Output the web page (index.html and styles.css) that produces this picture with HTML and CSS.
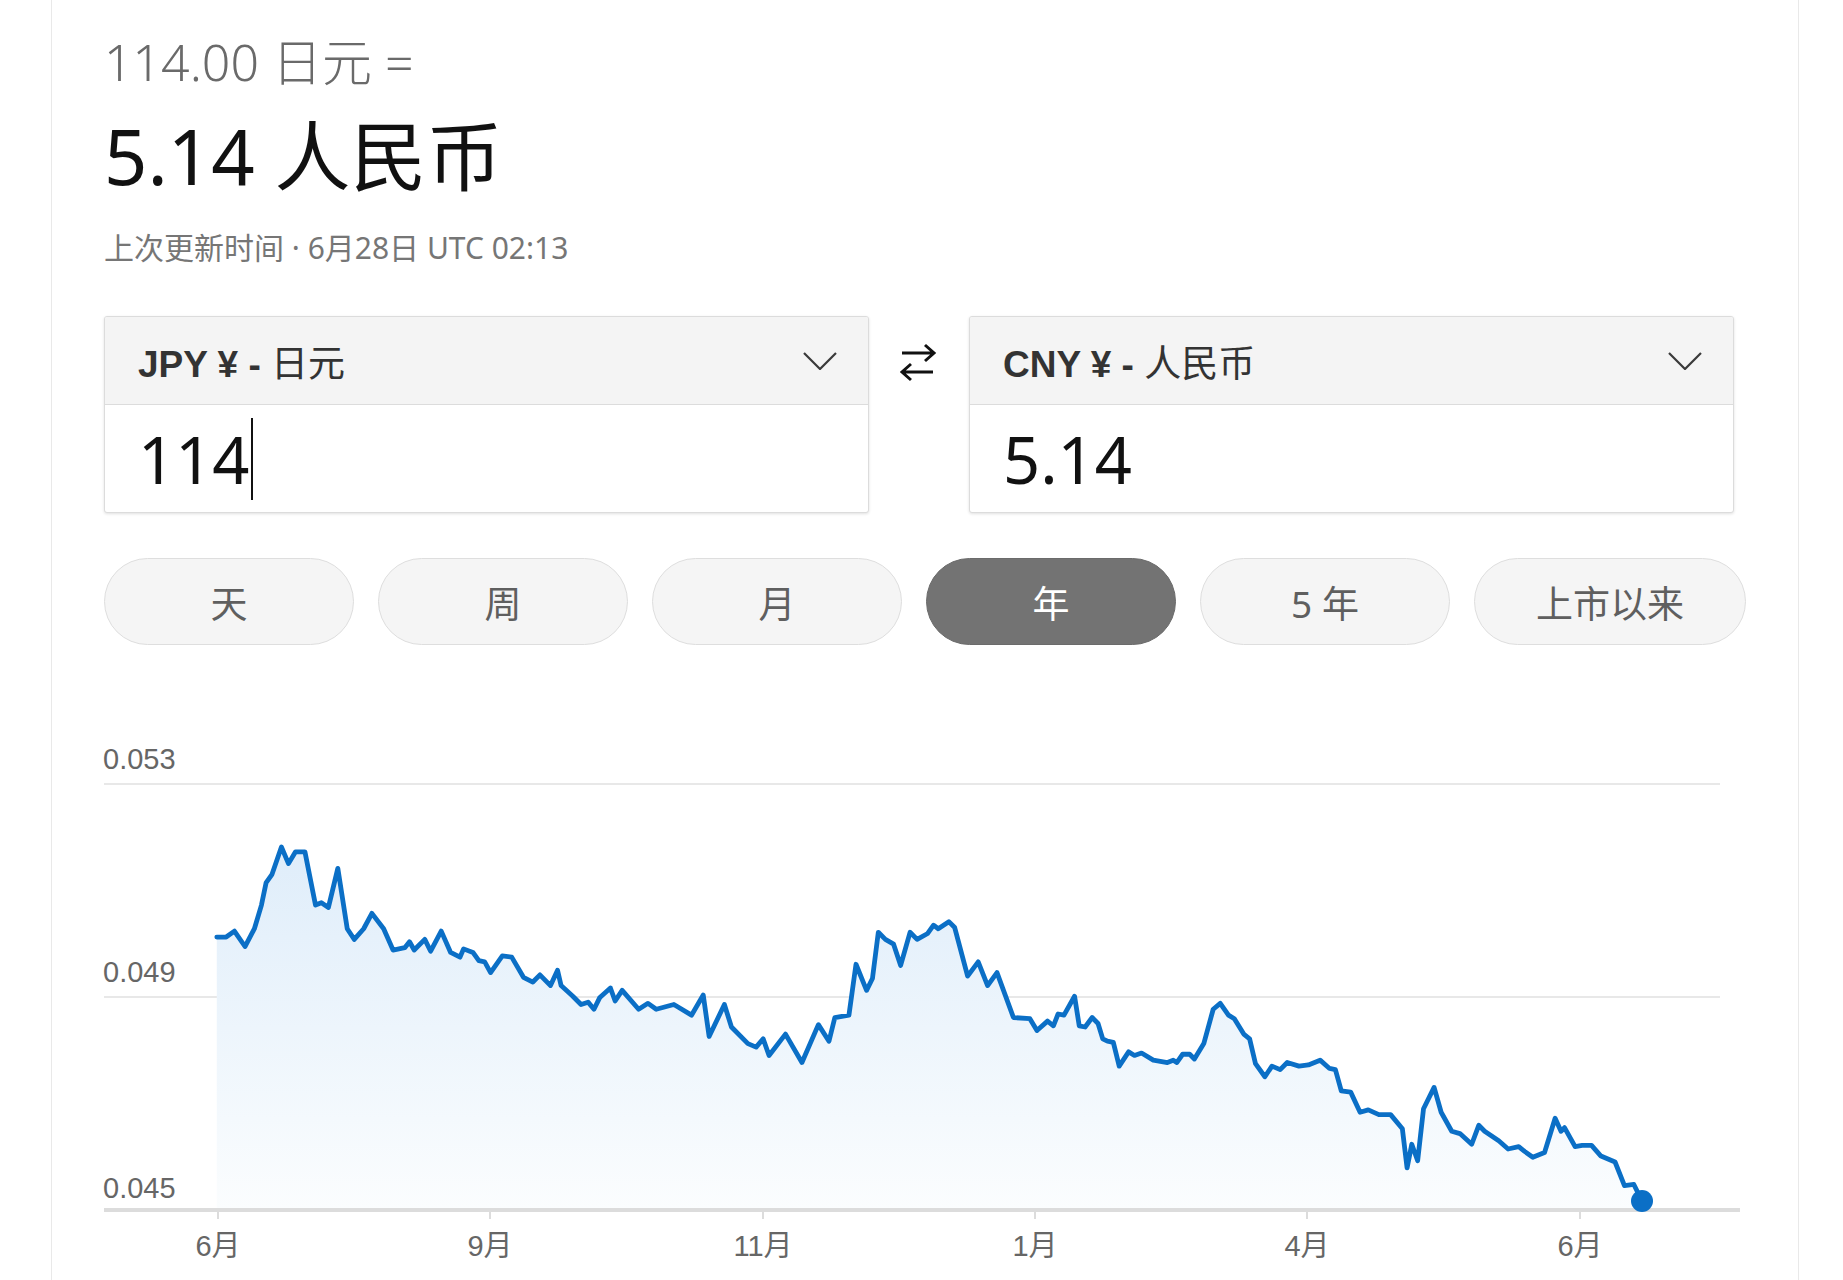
FILE: index.html
```html
<!DOCTYPE html>
<html lang="zh-CN">
<head>
<meta charset="utf-8">
<title>汇率换算</title>
<link rel="stylesheet" href="styles.css">
</head>
<body>
<div class="card">
  <div class="from-line">114.00 日元 =</div>
  <div class="to-line">5.14 人民币</div>
  <div class="updated">上次更新时间 · 6月28日 UTC 02:13</div>

  <div class="converter">
    <div class="conv-box">
      <div class="conv-head">
        <span class="conv-label"><span class="code">JPY ¥ - </span><span class="name">日元</span></span>
        <svg class="chevron" viewBox="0 0 34 18" width="34" height="18"><path d="M1 1l16 16L33 1" fill="none" stroke="#3a3a3a" stroke-width="2.2"/></svg>
      </div>
      <div class="conv-input"><span class="value">114</span><span class="caret"></span></div>
    </div>
    <div class="swap">
      <svg viewBox="0 0 40 40" width="40" height="40"><path d="M3 10h32M26 2l9 8-9 8M34 29H3M12 21l-9 8 9 8" fill="none" stroke="#111" stroke-width="3" stroke-linejoin="miter"/></svg>
    </div>
    <div class="conv-box">
      <div class="conv-head">
        <span class="conv-label"><span class="code">CNY ¥ - </span><span class="name">人民币</span></span>
        <svg class="chevron" viewBox="0 0 34 18" width="34" height="18"><path d="M1 1l16 16L33 1" fill="none" stroke="#3a3a3a" stroke-width="2.2"/></svg>
      </div>
      <div class="conv-input"><span class="value">5.14</span></div>
    </div>
  </div>

  <div class="ranges">
    <div class="range">天</div>
    <div class="range">周</div>
    <div class="range">月</div>
    <div class="range active">年</div>
    <div class="range">5 年</div>
    <div class="range">上市以来</div>
  </div>

  <svg class="chart" viewBox="104 720 1649 560" width="1649" height="560">
    <defs>
      <linearGradient id="fillGrad" x1="0" y1="0" x2="0" y2="1">
        <stop offset="0" stop-color="#dfedfa"/>
        <stop offset="1" stop-color="#fbfdfe"/>
      </linearGradient>
    </defs>
    <line x1="104" y1="785" x2="1720" y2="785" class="grid"/>
    <line x1="104" y1="998" x2="1720" y2="998" class="grid"/>
    <g transform="matrix(1.175 0 0 1.184 0.6 -6.8)">
      <path class="area" d="M184,798 L192,798 199,793 208,806 216,791 222,771 226,752 231,745 239,722 245,736 251,726 259,726 268,771 273,769 279,773 287,740 295,791 301,800 309,791 316,778 326,791 334,809 344,807 348,802 352,809 361,800 366,810 375,793 383,811 391,815 394,808 402,811 407,818 412,819 417,828 427,814 435,815 445,832 453,836 459,830 468,839 474,826 477,839 487,848 494,855 500,853 505,859 510,849 519,841 523,852 529,843 543,859 551,854 558,859 573,855 588,864 598,847 603,882 616,855 622,874 636,888 643,891 649,884 654,898 668,880 682,904 696,872 705,886 710,866 722,864 728,821 737,843 742,833 747,794 753,800 760,804 766,822 774,794 780,800 789,795 794,788 798,791 807,785 812,790 823,831 832,819 840,839 848,828 862,866 876,867 882,877 891,869 896,873 900,863 905,864 914,848 918,873 923,874 929,866 934,871 938,884 942,886 947,887 952,907 960,895 965,898 971,896 981,902 993,904 998,902 1001,904 1006,897 1012,897 1016,901 1024,888 1032,859 1038,854 1045,864 1050,867 1058,880 1063,884 1068,905 1076,916 1082,907 1089,910 1095,904 1105,907 1113,906 1123,902 1131,909 1136,910 1141,928 1149,929 1157,946 1164,944 1173,948 1183,948 1193,960 1197,993 1201,973 1206,987 1211,943 1220,925 1226,946 1235,962 1242,964 1252,973 1258,957 1263,962 1275,970 1283,977 1292,975 1297,979 1304,984 1314,980 1323,951 1328,962 1331,959 1340,975 1346,974 1354,974 1362,983 1374,988 1382,1008 1390,1007 1397,1021 L1397,1028 L184,1028 Z"/>
      <path class="line" d="M184,798 L192,798 199,793 208,806 216,791 222,771 226,752 231,745 239,722 245,736 251,726 259,726 268,771 273,769 279,773 287,740 295,791 301,800 309,791 316,778 326,791 334,809 344,807 348,802 352,809 361,800 366,810 375,793 383,811 391,815 394,808 402,811 407,818 412,819 417,828 427,814 435,815 445,832 453,836 459,830 468,839 474,826 477,839 487,848 494,855 500,853 505,859 510,849 519,841 523,852 529,843 543,859 551,854 558,859 573,855 588,864 598,847 603,882 616,855 622,874 636,888 643,891 649,884 654,898 668,880 682,904 696,872 705,886 710,866 722,864 728,821 737,843 742,833 747,794 753,800 760,804 766,822 774,794 780,800 789,795 794,788 798,791 807,785 812,790 823,831 832,819 840,839 848,828 862,866 876,867 882,877 891,869 896,873 900,863 905,864 914,848 918,873 923,874 929,866 934,871 938,884 942,886 947,887 952,907 960,895 965,898 971,896 981,902 993,904 998,902 1001,904 1006,897 1012,897 1016,901 1024,888 1032,859 1038,854 1045,864 1050,867 1058,880 1063,884 1068,905 1076,916 1082,907 1089,910 1095,904 1105,907 1113,906 1123,902 1131,909 1136,910 1141,928 1149,929 1157,946 1164,944 1173,948 1183,948 1193,960 1197,993 1201,973 1206,987 1211,943 1220,925 1226,946 1235,962 1242,964 1252,973 1258,957 1263,962 1275,970 1283,977 1292,975 1297,979 1304,984 1314,980 1323,951 1328,962 1331,959 1340,975 1346,974 1354,974 1362,983 1374,988 1382,1008 1390,1007 1397,1021"/>
    </g>
    <line x1="104" y1="1211" x2="1740" y2="1211" class="baseline"/>
    <g class="ticks">
      <line x1="218" y1="1212" x2="218" y2="1220"/>
      <line x1="490" y1="1212" x2="490" y2="1220"/>
      <line x1="763" y1="1212" x2="763" y2="1220"/>
      <line x1="1035" y1="1212" x2="1035" y2="1220"/>
      <line x1="1307" y1="1212" x2="1307" y2="1220"/>
      <line x1="1580" y1="1212" x2="1580" y2="1220"/>
    </g>
    <circle cx="1642" cy="1202" r="11" class="dot"/>
    <g class="ylabels">
      <text x="103" y="770">0.053</text>
      <text x="103" y="983">0.049</text>
      <text x="103" y="1199">0.045</text>
    </g>
    <g class="xlabels">
      <text x="218" y="1257">6月</text>
      <text x="490" y="1257">9月</text>
      <text x="763" y="1257">11月</text>
      <text x="1035" y="1257">1月</text>
      <text x="1307" y="1257">4月</text>
      <text x="1580" y="1257">6月</text>
    </g>
  </svg>
</div>
</body>
</html>
```

FILE: styles.css
```css
html, body {
  margin: 0;
  padding: 0;
  height: 1280px;
  overflow: hidden;
  background: #fff;
}

body {
  font-family: "Noto Sans", "Noto Sans CJK SC", sans-serif;
}

.card {
  margin-left: 51px;
  width: 1748px;
  height: 1280px;
  box-sizing: border-box;
  border-left: 1px solid #e9e9e9;
  border-right: 1px solid #e9e9e9;
  padding: 30px 52px 0;
}

.from-line {
  font-size: 50px;
  line-height: 64px;
  font-weight: 300;
  color: #6a6a6a;
}

.to-line {
  margin-top: 17px;
  font-size: 76px;
  line-height: 90px;
  color: #111;
}

.updated {
  margin-top: 27px;
  font-size: 30px;
  line-height: 40px;
  color: #767676;
}

.converter {
  display: flex;
  margin-top: 48px;
}

.conv-box {
  width: 765px;
  box-sizing: border-box;
  border: 1px solid #dcdcdc;
  border-radius: 3px;
  box-shadow: 0 1px 3px rgba(0, 0, 0, 0.12);
  background: #fff;
  overflow: hidden;
}

.conv-head {
  height: 88px;
  box-sizing: border-box;
  background: #f4f4f4;
  border-bottom: 1px solid #dcdcdc;
  display: flex;
  align-items: center;
  justify-content: space-between;
  padding: 0 31px 0 33px;
}

.conv-label {
  font-size: 37px;
  color: #333;
}

.conv-label .code {
  font-family: "Liberation Sans", "Noto Sans CJK SC", sans-serif;
  font-weight: 700;
}

.conv-label .name {
  font-family: "Noto Sans CJK SC", sans-serif;
}

.chevron {
  display: block;
}

.conv-input {
  height: 107px;
  display: flex;
  align-items: center;
  padding-left: 33px;
  font-size: 65px;
  color: #111;
}

.caret {
  display: inline-block;
  width: 2px;
  height: 82px;
  background: #111;
  margin-left: 1px;
}

.swap {
  width: 100px;
  display: flex;
  justify-content: center;
  align-items: flex-start;
  padding-top: 27px;
}

.swap svg {
  display: block;
}

.ranges {
  display: flex;
  gap: 24px;
  margin-top: 45px;
}

.range {
  min-width: 250px;
  height: 87px;
  box-sizing: border-box;
  padding: 0 61px;
  border: 1px solid #dedede;
  border-radius: 44px;
  background: #f5f5f5;
  color: #5f5f5f;
  font-size: 37px;
  display: flex;
  align-items: center;
  justify-content: center;
}

.range.active {
  background: #737373;
  border-color: #6b6b6b;
  color: #fff;
}

.chart {
  display: block;
  margin-top: 74px;
  overflow: visible;
}

.chart .grid {
  stroke: #e8e8e8;
  stroke-width: 2;
}

.chart .baseline {
  stroke: #dcdcdc;
  stroke-width: 4;
}

.chart .ticks line {
  stroke: #dcdcdc;
  stroke-width: 2;
}

.chart .area {
  fill: url(#fillGrad);
  stroke: none;
}

.chart .line {
  fill: none;
  stroke: #0b6fc6;
  stroke-width: 4.8;
  stroke-linejoin: round;
  stroke-linecap: round;
  vector-effect: non-scaling-stroke;
}

.chart .dot {
  fill: #0b6fc6;
}

.chart text {
  font-family: "Liberation Sans", "Noto Sans CJK SC", sans-serif;
  font-size: 29px;
  fill: #666;
}

.chart .xlabels text {
  text-anchor: middle;
}
```
